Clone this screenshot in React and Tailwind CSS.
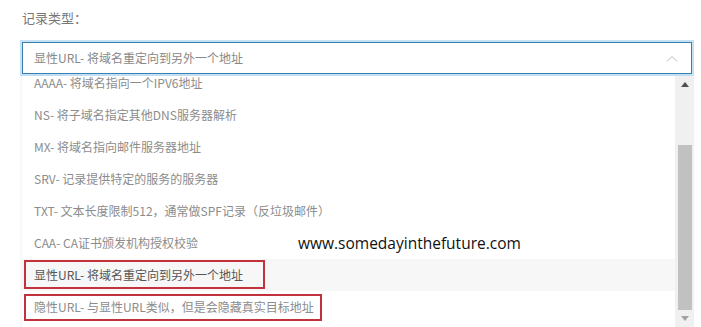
const options = [
  "AAAA- 将域名指向一个IPV6地址",
  "NS- 将子域名指定其他DNS服务器解析",
  "MX- 将域名指向邮件服务器地址",
  "SRV- 记录提供特定的服务的服务器",
  "TXT- 文本长度限制512，通常做SPF记录（反垃圾邮件）",
  "CAA- CA证书颁发机构授权校验",
  "显性URL- 将域名重定向到另外一个地址",
  "隐性URL- 与显性URL类似，但是会隐藏真实目标地址",
]

const selected = "显性URL- 将域名重定向到另外一个地址"

function ChevronUp() {
  return (
    <svg width="12" height="7" viewBox="0 0 12 7" fill="none">
      <path d="M1 6.5L6 1.5L11 6.5" stroke="#bcbcbc" strokeWidth="1" />
    </svg>
  )
}

function Scrollbar() {
  return (
    <div className="w-[19px] h-full bg-[#f0f0f0] flex flex-col items-center">
      <div className="h-[17px] flex items-center justify-center">
        <svg width="8" height="5" viewBox="0 0 8 5">
          <path d="M0 5L4 0L8 5Z" fill="#505050" />
        </svg>
      </div>
      <div className="h-[52px]" />
      <div className="w-[14px] h-[165px] bg-[#c1c1c1]" />
      <div className="h-[17px] flex items-center justify-center">
        <svg width="8" height="5" viewBox="0 0 8 5">
          <path d="M0 0L8 0L4 5Z" fill="#a3a3a3" />
        </svg>
      </div>
    </div>
  )
}

export default function App() {
  return (
    <div className="relative w-[701px] h-[327px] overflow-hidden bg-white font-['Noto_Sans_CJK_SC',sans-serif]">
      <div className="pt-[9px] pl-[22px] text-[13px] leading-[18px] text-[#777]">
        记录类型：
      </div>

      <div className="mt-[15px] ml-[22px] w-[670px] h-[32px] border border-[#3b7fb0] bg-white shadow-[0_0_0_2px_#c4e1f5] flex items-center justify-between pl-[11px] pr-[13px]">
        <span className="text-[12px] text-[#888]">{selected}</span>
        <ChevronUp />
      </div>

      <div className="mt-[2px] ml-[22px] w-[672px] h-[251px] flex bg-white shadow-[-1px_0_2px_rgba(0,0,0,0.06)]">
        <div className="flex-1 overflow-hidden">
          <div className="-mt-[9px]">
            {options.map((opt) => (
              <div
                key={opt}
                className={
                  opt === selected
                    ? "h-[32px] flex items-center pl-[12px] text-[12px] text-[#555] bg-[#f7f7f7]"
                    : "h-[32px] flex items-center pl-[12px] text-[12px] text-[#8c8c8c]"
                }
              >
                {opt}
              </div>
            ))}
          </div>
        </div>
        <Scrollbar />
      </div>

      {/* annotations over the list */}
      <div className="absolute left-[24px] top-[260px] w-[241px] h-[29px] border-2 border-[#c2323c]" />
      <div className="absolute left-[24px] top-[294px] w-[298px] h-[27px] border-2 border-[#c2323c]" />
      <div className="absolute left-[298px] top-[232px] text-[15.5px] leading-[22px] text-[#111] font-['Open_Sans',sans-serif]">
        www.somedayinthefuture.com
      </div>
    </div>
  )
}
